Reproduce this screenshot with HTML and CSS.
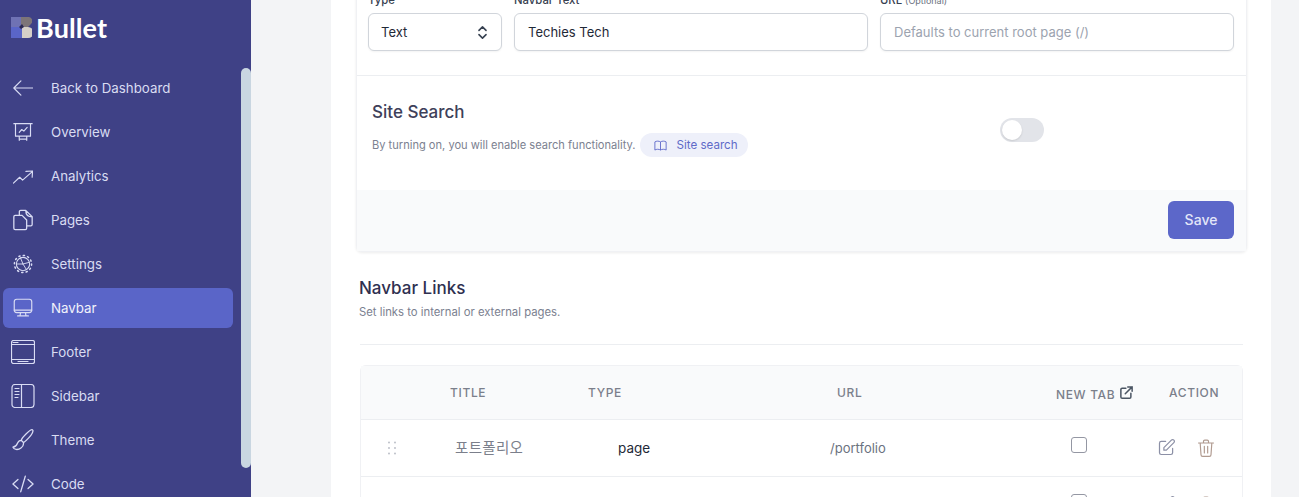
FILE: index.html
```html
<!DOCTYPE html>
<html lang="en">
<head>
<meta charset="utf-8">
<title>Navbar</title>
<link rel="stylesheet" href="styles.css">
</head>
<body>
<aside class="side">
  <div class="logo">
    <svg class="logo-mark" viewBox="0 0 21 21"><rect x="0" y="0" width="10" height="10" fill="#6f72b4"/><rect x="0" y="10" width="11" height="11" fill="#5a65c8"/><path d="M10 0h7a4 4 0 0 1 3 7l-3 3h-7z" fill="#7d7578"/><path d="M11 10h6a4 4 0 0 1 0 11h-6z" fill="#d6d0c8"/><path d="M8 10l3-3 2 3-3 2z" fill="#2c2a55"/></svg>
    <span class="logo-text">Bullet</span>
  </div>
  <nav class="nav">
    <a class="nav-item"><svg class="ni" viewBox="0 0 24 24"><path d="M9.500 3.500L1 12l8.500 8.500M1 12h23"/></svg><span>Back to Dashboard</span></a>
    <a class="nav-item"><svg class="ni" viewBox="0 0 24 24"><path d="M1 2h22M3 2v15h18V2M3 17h18M7.500 12.500l3-3.500 2.500 2 4-4.500M7.500 17v5M16.500 17v5M7.500 20.500h9"/></svg><span>Overview</span></a>
    <a class="nav-item"><svg class="ni" viewBox="0 0 24 24"><path d="M.5 20.500l7.500-7 3.500 3.500 12-10.500M15.500 6.500l8-.5-.5 7.500"/></svg><span>Analytics</span></a>
    <a class="nav-item"><svg class="ni ni-tall" viewBox="0 0 24 24"><path d="M8 7V3A1.500 1.500 0 0 1 9.500 1.500H15l7 7V17a1.500 1.500 0 0 1-1.500 1.500H16M15 1.500c0 5 2 7 7 7M2 8.500A1.500 1.500 0 0 1 3.500 7H11l5 5v9a1.500 1.500 0 0 1-1.500 1.500h-11A1.500 1.500 0 0 1 2 21z"/></svg><span>Pages</span></a>
    <a class="nav-item"><svg class="ni" viewBox="0 0 24 24"><circle cx="12" cy="12" r="8" stroke-width="1.300"/><circle cx="12" cy="12" r="10.300" stroke-dasharray="1.500 3.894" stroke-width="1.800"/><path d="M9 4.800l3 7.200H4.500M12 12l4 6.500M12 12l7.500-2" stroke-width="1.100"/></svg><span>Settings</span></a>
    <a class="nav-item is-active"><svg class="ni" viewBox="0 0 24 24"><rect x="1.500" y="1.500" width="21" height="16" rx="3"/><path d="M1.500 14.500h21M9 17.500l-.5 4M15 17.500l.5 4M5.500 21.500h13"/></svg><span>Navbar</span></a>
    <a class="nav-item"><svg class="ni ni-wide" viewBox="0 0 24 24"><rect x=".5" y=".5" width="23" height="23" rx="2"/><path d="M.5 4.500h23M.5 19.500h23M7 21.500h10M2 2.500h5"/></svg><span>Footer</span></a>
    <a class="nav-item"><svg class="ni ni-wide" viewBox="0 0 24 24"><rect x="1" y=".5" width="22" height="23" rx="3"/><path d="M10.500.5v23M4 4.500h4M4 7.500h4M4 10.500h4M4 13.500h3"/></svg><span>Sidebar</span></a>
    <a class="nav-item"><svg class="ni ni-tall" viewBox="0 0 24 24"><path d="M22.500 1c1.300 1-1 5.500-4.500 9-2.300 2.500-4.500 4.300-5.500 4.800L10 12.300c.5-1.500 2.300-3.800 5-6.500 3.300-3.300 6.300-5.800 7.500-4.800zM10 12.300c-2 .2-3.500 1.500-4.200 3.500-.6 2-1.600 3.500-4.800 4 .8 2.800 5.500 3.500 8.800 1 2.200-1.700 3-4 2.700-6"/></svg><span>Theme</span></a>
    <a class="nav-item"><svg class="ni ni-tall" viewBox="0 0 24 24"><path d="M6.500 7L1 12l5.500 5M17.500 7l5.500 5-5.500 5M14.500 3.500l-5 17"/></svg><span>Code</span></a>
  </nav>
  <div class="thumb"></div>
</aside>

<main class="main">
  <div class="panel">
    <section class="card">
      <div class="fields">
        <div class="field field-type">
          <label class="label">Type</label>
          <div class="input input-select"><span>Text</span><svg class="sel" viewBox="0 0 24 24"><path d="M7 9l5-5 5 5M17 15l-5 5-5-5"/></svg></div>
        </div>
        <div class="field">
          <label class="label">Navbar Text</label>
          <div class="input">Techies Tech</div>
        </div>
        <div class="field">
          <label class="label">URL <small class="opt">(Optional)</small></label>
          <div class="input is-placeholder">Defaults to current root page (/)</div>
        </div>
      </div>
      <div class="search">
        <div class="search-copy">
          <h3 class="search-title">Site Search</h3>
          <div class="search-line">
            <span class="muted">By turning on, you will enable search functionality.</span>
            <a class="pill"><svg class="pill-ic" viewBox="0 0 24 24"><path d="M12 6.253v13C10.832 18.477 9.246 18 7.500 18S4.168 18.477 3 19.253v-13C4.168 5.477 5.754 5 7.500 5s3.332.477 4.500 1.253zm0 0C13.168 5.477 14.754 5 16.500 5c1.747 0 3.332.477 4.500 1.253v13C19.832 18.477 18.247 18 16.500 18c-1.746 0-3.332.477-4.500 1.253"/></svg>Site search</a>
          </div>
        </div>
        <div class="toggle"><span class="knob"></span></div>
      </div>
      <div class="card-foot"><button class="save">Save</button></div>
    </section>

    <section class="links">
      <h3 class="links-title">Navbar Links</h3>
      <p class="muted links-desc">Set links to internal or external pages.</p>
      <hr class="rule">
      <div class="table">
        <div class="thead">
          <span></span><span>TITLE</span><span>TYPE</span><span>URL</span>
          <span class="th-tab">NEW TAB <svg class="ext" viewBox="0 0 24 24"><path d="M11 5H5a2 2 0 0 0-2 2v12a2 2 0 0 0 2 2h12a2 2 0 0 0 2-2v-6M14 3h7v7M21 3L10 14"/></svg></span>
          <span>ACTION</span>
        </div>
        <div class="row">
          <span class="drag"><svg viewBox="0 0 10 14"><g fill="#b6bac3"><circle cx="2" cy="1.500" r=".9"/><circle cx="8" cy="1.500" r=".9"/><circle cx="2" cy="7" r=".9"/><circle cx="8" cy="7" r=".9"/><circle cx="2" cy="12.500" r=".9"/><circle cx="8" cy="12.500" r=".9"/></g></svg></span>
          <span class="c-title">포트폴리오</span>
          <span class="c-type">page</span>
          <span class="c-url">/portfolio</span>
          <span class="check"></span>
          <span class="acts">
            <svg class="edit" viewBox="0 0 24 24"><path d="M11 5H6a2 2 0 0 0-2 2v11a2 2 0 0 0 2 2h11a2 2 0 0 0 2-2v-5m-1.414-9.414a2 2 0 1 1 2.828 2.828L11.828 15H9v-2.828l8.586-8.586z"/></svg>
            <svg class="trash" viewBox="0 0 24 24"><path d="M3 6h18M9 6V4a1.500 1.500 0 0 1 1.500-1.500h3A1.500 1.500 0 0 1 15 4v2M5 6l1 14a2 2 0 0 0 2 2h8a2 2 0 0 0 2-2l1-14M10 10v8M14 10v8"/></svg>
          </span>
        </div>
        <div class="row">
          <span class="drag"></span><span></span><span></span><span></span>
          <span class="check"></span>
          <span class="acts">
            <svg class="edit" viewBox="0 0 24 24"><path d="M11 5H6a2 2 0 0 0-2 2v11a2 2 0 0 0 2 2h11a2 2 0 0 0 2-2v-5m-1.414-9.414a2 2 0 1 1 2.828 2.828L11.828 15H9v-2.828l8.586-8.586z"/></svg>
            <svg class="trash" viewBox="0 0 24 24"><path d="M3 6h18M9 6V4a1.500 1.500 0 0 1 1.500-1.500h3A1.500 1.500 0 0 1 15 4v2M5 6l1 14a2 2 0 0 0 2 2h8a2 2 0 0 0 2-2l1-14M10 10v8M14 10v8"/></svg>
          </span>
        </div>
      </div>
    </section>
  </div>
</main>
</body>
</html>
```
FILE: styles.css
```css
* { box-sizing: border-box; }
html, body { height: 100%; }
body {
  margin: 0;
  height: 497px;
  overflow: hidden;
  display: flex;
  font-family: Inter, "Noto Sans CJK KR", sans-serif;
  color: #1f2937;
  background: #f3f4f6;
}

/* sidebar */
.side {
  position: relative;
  flex: 0 0 251px;
  height: 497px;
  overflow: hidden;
  background: #3f4186;
  padding: 0 18px 0 3px;
}
.logo { height: 68px; display: flex; align-items: center; padding: 0 0 13px 8px; }
.logo-mark { width: 21px; height: 21px; flex: none; }
.logo-text { margin-left: 4px; font-family: Lato, sans-serif; font-weight: 700; font-size: 27px; line-height: 32px; color: #fff; letter-spacing: .1px; }
.nav { display: flex; flex-direction: column; gap: 4px; }
.nav-item {
  height: 40px;
  flex: none;
  display: flex;
  align-items: center;
  border-radius: 6px;
  font-size: 13.300px;
  color: #d9dcf2;
}
.nav-item > span { margin-left: 6px; line-height: 16px; padding-bottom: 0; margin-top: 0; }
.ni {
  width: 20px; height: 20px;
  margin: -1px 12px 0 10px;
  flex: none;
  fill: none;
  stroke: #d9dcf4;
  stroke-width: 1.400;
  stroke-linecap: round;
  stroke-linejoin: round;
}
.ni-tall { width: 22px; height: 22px; margin: -1px 11px 0 9px; }
.ni-wide { width: 24px; height: 24px; margin: -1px 10px 0 8px; stroke-width: 1.200; }
.is-active { background: #5a65c8; color: #f1f2fb; }
.thumb {
  position: absolute;
  left: 241px; top: 68px;
  width: 10px; height: 400px;
  border-radius: 5px;
  background: #c9d6e1;
}

/* main */
.main { flex: 1; padding: 0 28px 0 80px; min-width: 0; }
.panel { background: #fff; padding: 0 24px 0 25px; margin-top: -20px; height: 517px; }

.card {
  border: 1px solid #f0f1f4;
  border-top: 0;
  border-radius: 0 0 6px 6px;
  box-shadow: 0 1px 3px rgba(0,0,0,.08);
  background: #fff;
}
.fields {
  display: grid;
  grid-template-columns: 134px 1fr 1fr;
  gap: 12px;
  padding: 13px 12px 24px 11px;
  border-bottom: 1px solid #eceef1;
}
.label { display: block; height: 16px; margin-bottom: 4px; font-size: 11.300px; line-height: 15px; font-weight: 500; color: #374151; }
.opt { font-size: 9px; font-weight: 400; color: #6b7280; }
.input {
  height: 38px;
  border: 1px solid #d1d5db;
  border-radius: 6px;
  box-shadow: 0 1px 2px rgba(0,0,0,.05);
  display: flex;
  align-items: center;
  padding: 0 13px;
  font-size: 13px;
  line-height: 16px;
  color: #1f2937;
  background: #fff;
}
.input-select { justify-content: space-between; padding-right: 10px; padding-left: 12px; }
.sel { width: 17px; height: 17px; fill: none; stroke: #374151; stroke-width: 2.200; stroke-linecap: round; stroke-linejoin: round; }
.is-placeholder { color: #9ca3af; }

.search {
  height: 114px;
  display: flex;
  padding: 25px 15px 0;
}
.search-copy { width: 628px; flex: none; }
.search-title { margin: 0; font-size: 17px; line-height: 22px; font-weight: 500; color: #3e4059; }
.search-line { display: flex; align-items: center; margin-top: 10px; }
.muted { font-size: 11.100px; color: #7b8190; line-height: 16px; }
.pill {
  margin-left: 5px;
  width: 108px;
  height: 24px;
  padding: 0 0 0 13px;
  display: inline-flex;
  align-items: center;
  gap: 8px;
  border-radius: 12px;
  background: #eef0fa;
  font-size: 11.600px;
  color: #5f6ac8;
}
.pill-ic { width: 15px; height: 15px; fill: none; stroke: #5a65c8; stroke-width: 1.400; }
.toggle {
  width: 44px; height: 24px;
  margin-top: 17px;
  border-radius: 12px;
  background: #e2e4e9;
  padding: 2px;
}
.knob { display: block; width: 20px; height: 20px; border-radius: 50%; background: #fff; box-shadow: 0 1px 2px rgba(0,0,0,.12); }

.card-foot {
  height: 61px;
  background: #f9fafb;
  padding: 11px 12px 0 0;
  display: flex;
  justify-content: flex-end;
  align-items: flex-start;
}
.save {
  width: 66px; height: 38px;
  border: 0;
  border-radius: 6px;
  padding: 0 0 2px;
  background: #5c67c9;
  color: #e3e6f8;
  font: 500 14px Inter, sans-serif;
}

/* links */
.links { padding: 26px 4px 0 3px; }
.links-title { margin: 0; font-size: 17px; line-height: 20px; font-weight: 500; color: #2f3050; }
.links-desc { margin: 6px 0 0; font-size: 11.300px; line-height: 16px; }
.rule { margin: 24px 0 20px 1px; height: 1px; border: 0; background: #eceef1; }
.table { margin-left: 1px; border: 1px solid #f0f1f4; border-radius: 6px 6px 0 0; background: #fff; }
.thead {
  height: 54px;
  display: grid;
  grid-template-columns: 89px 138px 249px 219px 113px 1fr;
  align-items: center;
  background: #f9fafb;
  border-bottom: 1px solid #eceef1;
  font-size: 12px;
  font-weight: 500;
  letter-spacing: .65px;
  color: #7b7f8b;
}
.th-tab { display: flex; align-items: center; gap: 4px; padding-top: 3px; }
.ext { width: 15px; height: 15px; margin-top: -3px; fill: none; stroke: #4b5563; stroke-width: 2.400; stroke-linecap: round; stroke-linejoin: round; }
.row {
  height: 57px;
  display: grid;
  grid-template-columns: 94px 163px 212px 241px 85px 1fr;
  align-items: center;
  border-bottom: 1px solid #eceef1;
  font-size: 13px;
}
.drag { display: flex; padding-left: 26px; }
.drag svg { width: 10px; height: 14px; margin-top: -1px; }
.c-title { color: #7b7f8b; font-size: 14.500px; font-family: "Noto Sans CJK KR", sans-serif; letter-spacing: .3px; margin-top: -3px; }
.c-type { color: #1f2937; font-size: 13.500px; margin-top: -1px; }
.c-url { color: #6b7280; margin-top: -1px; }
.check { width: 16px; height: 16px; margin-top: -6px; border: 1.500px solid #9497a3; border-radius: 3px; background: #fff; }
.acts { display: flex; align-items: center; gap: 19px; margin-top: -1px; }
.edit { width: 21px; height: 21px; flex: none; fill: none; stroke: #8c90a6; stroke-width: 1.400; stroke-linecap: round; stroke-linejoin: round; }
.trash { width: 20px; height: 20px; flex: none; fill: none; stroke: #b09a8f; stroke-width: 1.400; stroke-linecap: round; stroke-linejoin: round; }
```
